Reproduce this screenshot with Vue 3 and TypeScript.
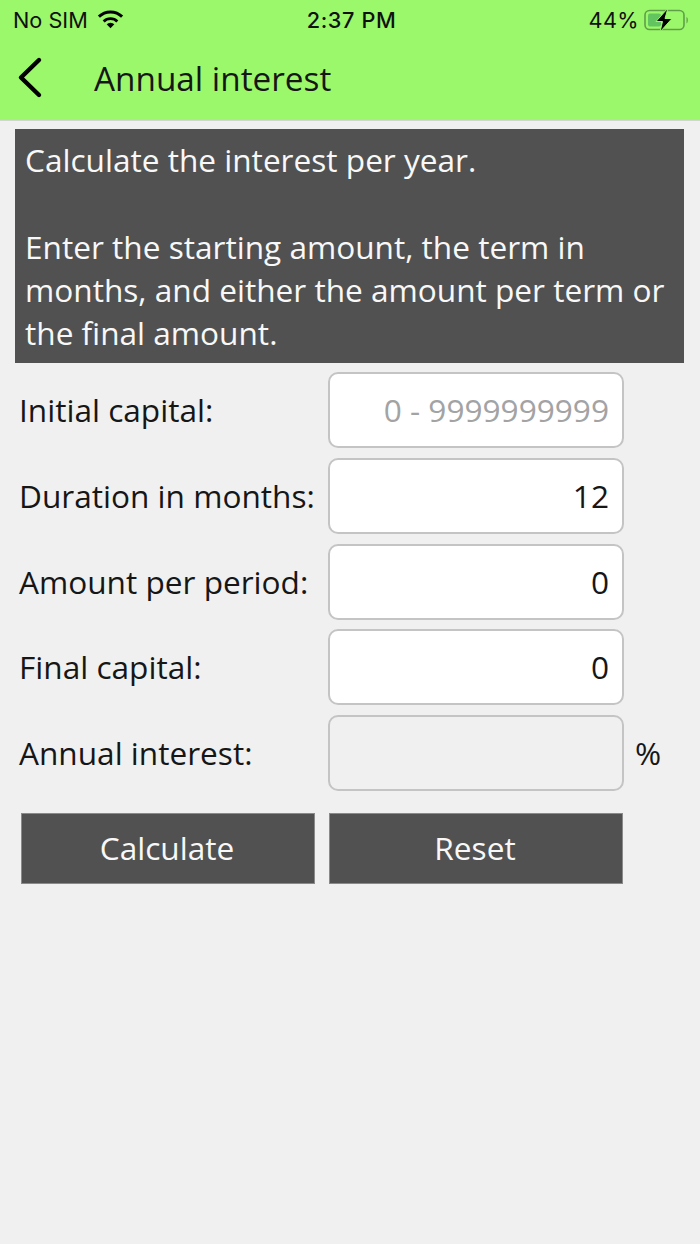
<script setup lang="ts">
interface Row { label: string; value: string; placeholder?: boolean; disabled?: boolean; unit?: string }
const rows: Row[] = [
  { label: 'Initial capital:', value: '0 - 9999999999', placeholder: true },
  { label: 'Duration in months:', value: '12' },
  { label: 'Amount per period:', value: '0' },
  { label: 'Final capital:', value: '0' },
  { label: 'Annual interest:', value: '', disabled: true, unit: '%' },
]
</script>

<template>
  <div class="page">
    <header class="head">
      <div class="status">
        <div class="st-left">
          <span>No SIM</span>
          <svg class="wifi" viewBox="0 0 28 19" width="29" height="20">
            <path d="M14 18.500l-3.700-3.900a5.200 5.200 0 0 1 7.400 0z" fill="#000" />
            <path d="M7.400 11.800a9.400 9.400 0 0 1 13.200 0" fill="none" stroke="#000" stroke-width="2.700" />
            <path d="M2.800 7.200a16 16 0 0 1 22.400 0" fill="none" stroke="#000" stroke-width="2.900" />
          </svg>
        </div>
        <div class="st-time">2:37 PM</div>
        <div class="st-right">
          <span>44%</span>
          <svg class="batt" viewBox="0 0 46 26" width="46" height="26">
            <rect x="1" y="3.500" width="39" height="19" rx="4.500" fill="none" stroke="#5f9f4a" stroke-width="1.600" />
            <rect x="4" y="6.500" width="13" height="13" rx="2" fill="#62c45e" />
            <path d="M42.500 10c1.800.5 1.800 5.500 0 6.500z" fill="#5f9f4a" />
            <path d="M24 1L12 14.500h6.500L16 25 28 11.500h-7z" fill="#000" stroke="#9cf86b" stroke-width="1" />
          </svg>
        </div>
      </div>
      <div class="nav">
        <svg class="back" viewBox="0 0 28 44" width="28" height="44">
          <path d="M24 4L6 21.500 24 39" fill="none" stroke="#000" stroke-width="4.400" stroke-linecap="round" stroke-linejoin="round" />
        </svg>
        <h1>Annual interest</h1>
      </div>
    </header>

    <main class="body">
      <section class="intro">
        <p>Calculate the interest per year.</p>
        <p>Enter the starting amount, the term in months, and either the amount per term or the final amount.</p>
      </section>

      <div class="form">
        <div v-for="r in rows" :key="r.label" class="row">
          <label>{{ r.label }}</label>
          <div class="field" :class="{ ph: r.placeholder, off: r.disabled }">{{ r.value }}</div>
          <span v-if="r.unit" class="unit">{{ r.unit }}</span>
        </div>
      </div>

      <div class="buttons">
        <button type="button">Calculate</button>
        <button type="button">Reset</button>
      </div>
    </main>
  </div>
</template>

<style>
body { background: #f0f0f0; }
</style>

<style scoped>
.page {
  width: 700px;
  height: 1244px;
  background: #f0f0f0;
  font-family: "Open Sans", sans-serif;
  font-weight: 400;
  color: #161616;
  overflow: hidden;
}
.head {
  height: 121px;
  box-sizing: border-box;
  background: #9cf86b;
  border-bottom: 1px solid #d4d4d4;
}
.status {
  height: 40px;
  display: grid;
  grid-template-columns: 1fr auto 1fr;
  align-items: center;
  padding: 0 10px 0 13px;
  font-family: Inter, sans-serif;
  font-size: 21.7px;
  font-weight: 400;
  color: #111;
}
.st-left { display: flex; align-items: center; gap: 8px; }
.wifi { margin-top: -2px; }
.st-time { font-weight: 500; letter-spacing: .6px; }
.st-right { display: flex; justify-content: flex-end; align-items: center; gap: 5px; letter-spacing: .4px; }
.nav {
  height: 80px;
  display: flex;
  align-items: center;
  padding-left: 15px;
  margin-top: -2px;
}
.back { flex: none; }
.nav h1 {
  margin: 0 0 0 51px;
  font-size: 33.3px;
  font-weight: 400;
  line-height: 44px;
}
.body { padding: 8px 16px 0 15px; }
.intro {
  background: #515151;
  color: #f8f8f8;
  padding: 9px 10px 9px 10px;
  font-size: 31.6px;
  line-height: 43px;
  height: 234px;
  box-sizing: border-box;
}
.intro p { margin: 0 0 44px; }
.intro p:last-child { margin: 0; }
.form {
  display: flex;
  flex-direction: column;
  gap: 9.75px;
  margin-top: 9px;
}
.row {
  display: flex;
  align-items: center;
  height: 76px;
}
.row label {
  width: 313px;
  padding: 0 0 1px 4px;
  box-sizing: border-box;
  font-size: 31.6px;
  white-space: nowrap;
}
.field {
  width: 296px;
  height: 76px;
  box-sizing: border-box;
  background: #fff;
  border: 2px solid #c4c4c4;
  border-radius: 10px;
  font-size: 31.6px;
  line-height: 71px;
  text-align: right;
  padding-right: 13px;
}
.field.ph { color: #a3a3a3; }
.field.off { background: #f0f0f0; }
.unit { margin-left: 11px; padding-bottom: 2px; font-size: 31.6px; }
.buttons {
  display: flex;
  gap: 14px;
  margin: 22px 0 0 6px;
}
.buttons button {
  width: 294px;
  height: 71px;
  background: #515151;
  color: #f8f8f8;
  border: 1px solid #8a8a8a;
  border-radius: 0;
  padding: 0 2px 2px 0;
  font-family: inherit;
  font-weight: 400;
  font-size: 31.6px;
}
</style>
